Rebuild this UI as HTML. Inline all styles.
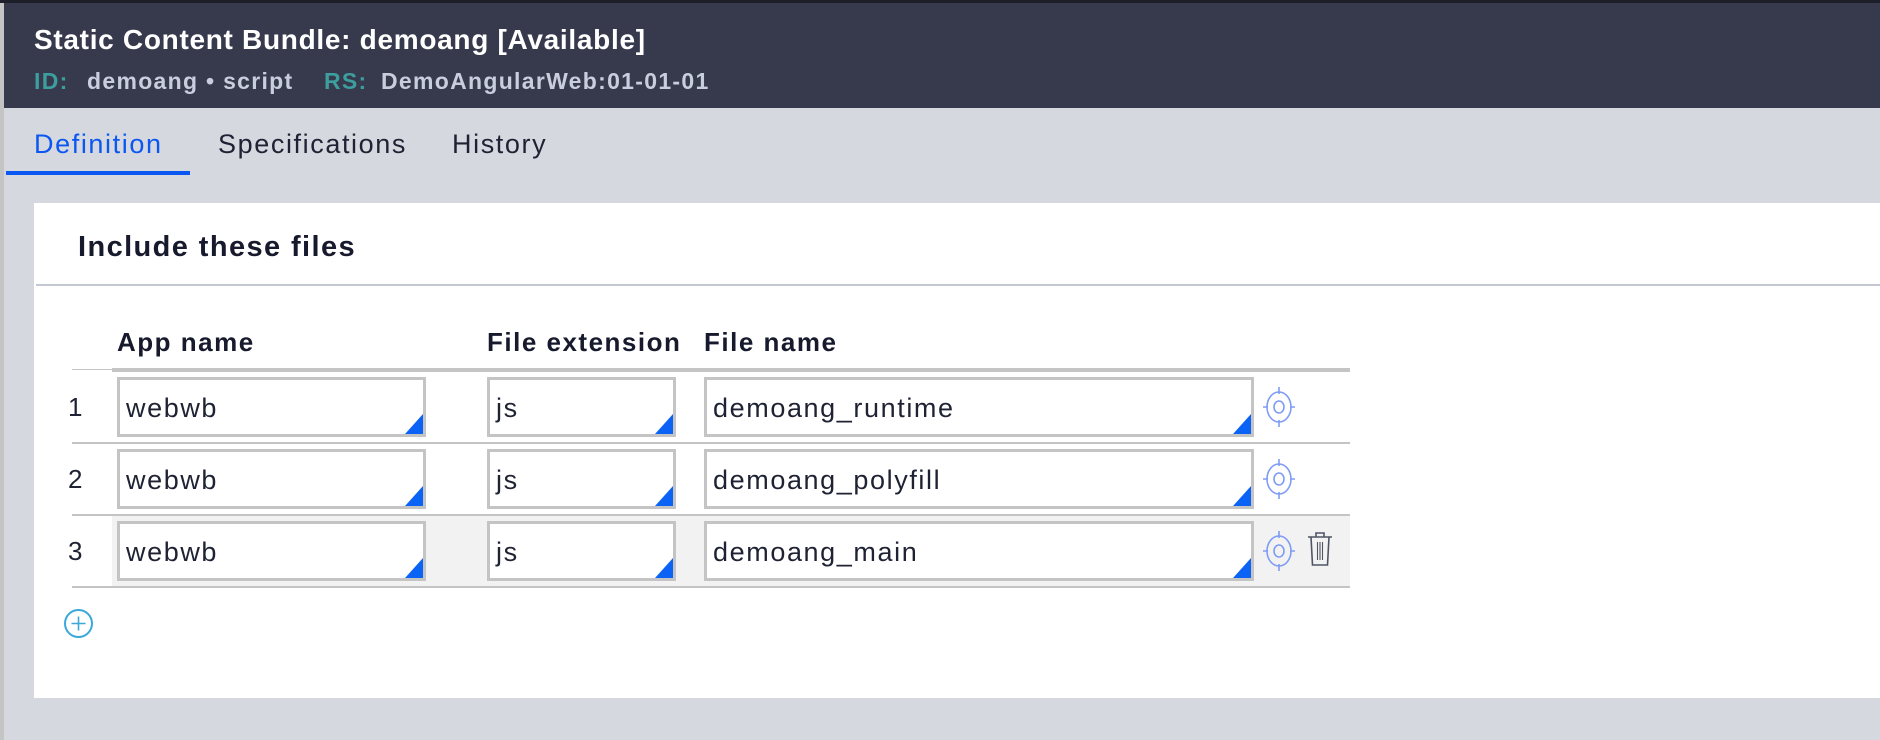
<!DOCTYPE html>
<html><head><meta charset="utf-8"><style>
*{margin:0;padding:0;box-sizing:border-box}
body{width:1880px;height:740px;overflow:hidden;background:#d5d8df;font-family:"Liberation Sans",sans-serif;position:relative}
.abs{position:absolute;white-space:nowrap}
.strip{left:0;top:0;width:4px;height:740px;background:#c4c4c4}
.top{left:0;top:0;width:1880px;height:3px;background:#1d1f29}
.hdr{left:4px;top:3px;width:1876px;height:105px;background:#373a4d}
.title{left:34px;top:24px;color:#fff;font-weight:bold;font-size:28px;letter-spacing:0.7px}
.sub{top:68px;font-weight:bold;font-size:23px;letter-spacing:1.3px}
.tab{top:129px;font-size:27px;color:#1e2233;letter-spacing:1.6px}
.card{left:34px;top:203px;width:1846px;height:495px;background:#fff}
.inp{position:absolute;height:60px;border:3px solid #c4c4c4;background:#fff;font-size:27px;color:#1e2233;padding:13px 0 0 6px;letter-spacing:1.6px}
.inp:after{content:"";position:absolute;right:0;bottom:0;width:0;height:0;border-left:18px solid transparent;border-bottom:20px solid #0b63f6}
.th{top:327px;font-weight:bold;font-size:26px;color:#161a2c;letter-spacing:1.5px}
.num{font-size:26px;color:#1e2233}
</style></head><body>
<div class="abs strip"></div>
<div class="abs hdr"></div>
<div class="abs top"></div>
<div class="abs title">Static Content Bundle: demoang [Available]</div>
<div class="abs sub" style="left:34px;color:#3d9e9e">ID:</div>
<div class="abs sub" style="left:87px;color:#c9cede">demoang • script</div>
<div class="abs sub" style="left:324px;color:#3d9e9e">RS:</div>
<div class="abs sub" style="left:381px;color:#c9cede">DemoAngularWeb:01-01-01</div>
<div class="abs tab" style="left:34px;color:#0b57f2">Definition</div>
<div class="abs tab" style="left:218px">Specifications</div>
<div class="abs tab" style="left:452px">History</div>
<div class="abs" style="left:6px;top:171px;width:184px;height:4px;background:#0b57f2"></div>
<div class="abs card"></div>
<div class="abs" style="left:78px;top:231px;font-size:29px;font-weight:bold;color:#161a2c;letter-spacing:1.4px">Include these files</div>
<div class="abs" style="left:36px;top:284px;width:1844px;height:2px;background:#c4c8d2"></div>
<div class="abs th" style="left:117px">App name</div>
<div class="abs th" style="left:487px">File extension</div>
<div class="abs th" style="left:704px">File name</div>
<div class="abs" style="left:72px;top:369px;width:40px;height:1px;background:#c4c4c4"></div>
<div class="abs" style="left:112px;top:368px;width:1238px;height:4px;background:#c4c4c4"></div>
<div class="abs" style="left:112px;top:516px;width:1238px;height:71px;background:#f2f2f2"></div>
<div class="abs" style="left:72px;top:442px;width:1278px;height:2px;background:#c4c4c4"></div>
<div class="abs" style="left:72px;top:514px;width:1278px;height:2px;background:#c4c4c4"></div>
<div class="abs" style="left:72px;top:586px;width:1278px;height:2px;background:#c4c4c4"></div>

<div class="abs num" style="left:68px;top:392px">1</div>
<div class="abs num" style="left:68px;top:464px">2</div>
<div class="abs num" style="left:68px;top:536px">3</div>

<div class="inp" style="left:117px;top:377px;width:309px">webwb</div>
<div class="inp" style="left:487px;top:377px;width:189px">js</div>
<div class="inp" style="left:704px;top:377px;width:550px">demoang_runtime</div>
<div class="inp" style="left:117px;top:449px;width:309px">webwb</div>
<div class="inp" style="left:487px;top:449px;width:189px">js</div>
<div class="inp" style="left:704px;top:449px;width:550px">demoang_polyfill</div>
<div class="inp" style="left:117px;top:521px;width:309px">webwb</div>
<div class="inp" style="left:487px;top:521px;width:189px">js</div>
<div class="inp" style="left:704px;top:521px;width:550px">demoang_main</div>

<svg class="abs" style="left:1262px;top:386px" width="34" height="42" viewBox="0 0 34 42"><g fill="none" stroke="#7f9cf5" stroke-width="1.6"><ellipse cx="17" cy="21" rx="12" ry="15"/><ellipse cx="17" cy="21" rx="5" ry="6"/><path d="M17 1v7M17 34v7M1 21h5M28 21h5"/></g></svg>
<svg class="abs" style="left:1262px;top:458px" width="34" height="42" viewBox="0 0 34 42"><g fill="none" stroke="#7f9cf5" stroke-width="1.6"><ellipse cx="17" cy="21" rx="12" ry="15"/><ellipse cx="17" cy="21" rx="5" ry="6"/><path d="M17 1v7M17 34v7M1 21h5M28 21h5"/></g></svg>
<svg class="abs" style="left:1262px;top:530px" width="34" height="42" viewBox="0 0 34 42"><g fill="none" stroke="#7f9cf5" stroke-width="1.6"><ellipse cx="17" cy="21" rx="12" ry="15"/><ellipse cx="17" cy="21" rx="5" ry="6"/><path d="M17 1v7M17 34v7M1 21h5M28 21h5"/></g></svg>
<svg class="abs" style="left:1306px;top:531px" width="28" height="36" viewBox="0 0 28 36"><g fill="none" stroke="#505466" stroke-width="1.6"><path d="M2 6h24M10 6V2h8v4M5 6l1.5 28h15L23 6"/><path d="M11.5 11v18M14 11v18M16.5 11v18" stroke-width="1.1"/></g></svg>
<svg class="abs" style="left:63px;top:608px" width="31" height="31" viewBox="0 0 31 31"><g fill="none" stroke="#3aa8d8" stroke-width="2"><circle cx="15.5" cy="15.5" r="13.5"/><path d="M15.5 8.5v14M8.5 15.5h14" stroke-width="1.6"/></g></svg>
</body></html>
